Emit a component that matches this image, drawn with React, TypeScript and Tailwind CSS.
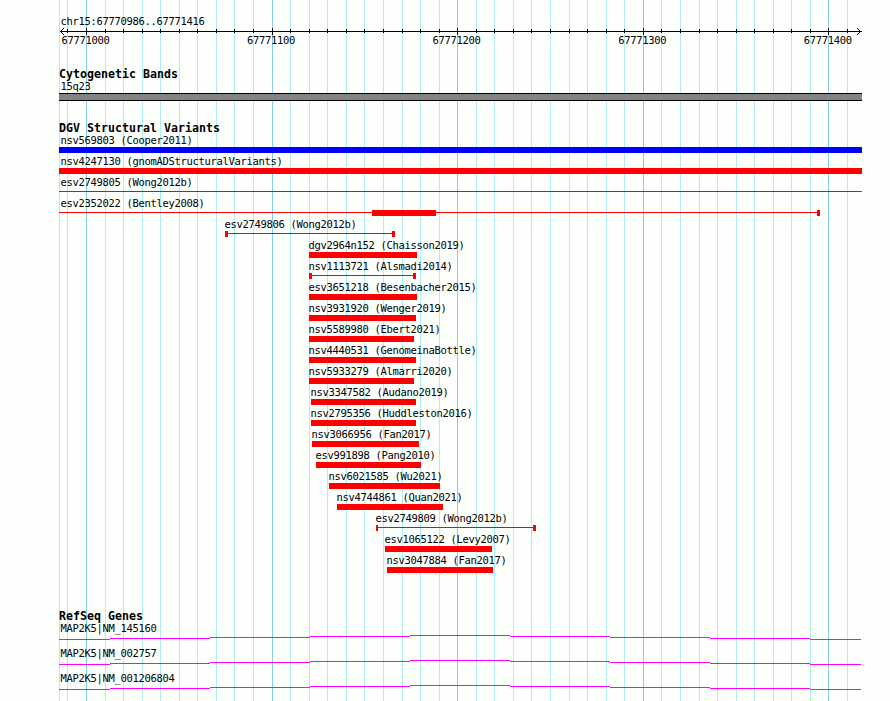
type Span = [start: number, end: number];

type Variant = {
  name: string;
  study: string;
  line?: Span;
  boxes: Span[];
  labelX: number;
  color?: string;
};

const TRACK_LEFT = 59;
const TRACK_RIGHT = 862;

const majorLines = [86, 272, 457, 643, 828];
const minorLines = [
  59, 67, 105, 123, 142, 160, 179, 197, 216, 234, 253, 290, 309, 327, 346, 364, 383, 402, 420, 439,
  476, 494, 513, 531, 550, 569, 587, 606, 624, 661, 680, 699, 717, 736, 754, 773, 791, 810, 847,
];

const positions = [67771000, 67771100, 67771200, 67771300, 67771400];

const variants: Variant[] = [
  { name: "nsv569803", study: "Cooper2011", boxes: [[59, 862]], labelX: 60, color: "#0000ff" },
  { name: "nsv4247130", study: "gnomADStructuralVariants", boxes: [[59, 862]], labelX: 60 },
  { name: "esv2749805", study: "Wong2012b", line: [59, 862], boxes: [], labelX: 60 },
  { name: "esv2352022", study: "Bentley2008", line: [59, 820], boxes: [[372, 436], [817, 820]], labelX: 60 },
  { name: "esv2749806", study: "Wong2012b", line: [225, 395], boxes: [[225, 228], [392, 395]], labelX: 224 },
  { name: "dgv2964n152", study: "Chaisson2019", boxes: [[309, 417]], labelX: 308 },
  { name: "nsv1113721", study: "Alsmadi2014", line: [309, 416], boxes: [[309, 312], [413, 416]], labelX: 308 },
  { name: "esv3651218", study: "Besenbacher2015", boxes: [[309, 417]], labelX: 308 },
  { name: "nsv3931920", study: "Wenger2019", boxes: [[309, 416]], labelX: 308 },
  { name: "nsv5589980", study: "Ebert2021", boxes: [[309, 414]], labelX: 308 },
  { name: "nsv4440531", study: "GenomeinaBottle", boxes: [[309, 416]], labelX: 308 },
  { name: "nsv5933279", study: "Almarri2020", boxes: [[309, 414]], labelX: 308 },
  { name: "nsv3347582", study: "Audano2019", boxes: [[311, 416]], labelX: 310 },
  { name: "nsv2795356", study: "Huddleston2016", boxes: [[311, 416]], labelX: 310 },
  { name: "nsv3066956", study: "Fan2017", boxes: [[312, 419]], labelX: 311 },
  { name: "esv991898", study: "Pang2010", boxes: [[316, 421]], labelX: 315 },
  { name: "nsv6021585", study: "Wu2021", boxes: [[329, 440]], labelX: 328 },
  { name: "nsv4744861", study: "Quan2021", boxes: [[337, 443]], labelX: 336 },
  { name: "esv2749809", study: "Wong2012b", line: [376, 536], boxes: [[376, 378], [533, 536]], labelX: 375 },
  { name: "esv1065122", study: "Levy2007", boxes: [[385, 492]], labelX: 384 },
  { name: "nsv3047884", study: "Fan2017", boxes: [[387, 493]], labelX: 386 },
];

const genes = ["MAP2K5|NM_145160", "MAP2K5|NM_002757", "MAP2K5|NM_001206804"];

// The intron is drawn as a very flat hat, one pixel per step
const intronSteps = [
  { x: 59, end: 110, y: 4 },
  { x: 110, end: 210, y: 3 },
  { x: 210, end: 310, y: 2 },
  { x: 310, end: 410, y: 1 },
  { x: 410, end: 510, y: 0 },
  { x: 510, end: 610, y: 1 },
  { x: 610, end: 710, y: 2 },
  { x: 710, end: 810, y: 3 },
  { x: 810, end: 861, y: 4 },
];

const Gridlines = () => (
  <svg className="absolute inset-0" width={890} height={701} shapeRendering="crispEdges">
    {minorLines.map((x) => (
      <rect key={x} x={x} y={0} width={1} height={701} fill="#afeeee" />
    ))}
    {majorLines.map((x) => (
      <rect key={x} x={x} y={0} width={1} height={701} fill="#87ceeb" />
    ))}
  </svg>
);

const Label = ({ children, x = 60 }: { children: string; x?: number }) => (
  <div
    className="h-3 whitespace-pre text-[10.5px] leading-3 tracking-[-0.321px]"
    style={{ paddingLeft: x + 0.4 }}
  >
    {children}
  </div>
);

const TrackTitle = ({ children }: { children: string }) => (
  <h2 className="h-3 whitespace-pre pl-[59px] text-[11.6px] leading-3 font-bold tracking-[0.017px]">
    {children}
  </h2>
);

const Ruler = () => (
  <div>
    <svg className="block" width={890} height={7} shapeRendering="crispEdges">
      <rect x={60} y={3} width={802} height={1} />
      {minorLines.slice(1).map((x) => (
        <rect key={x} x={x} y={1} width={1} height={4} />
      ))}
      {majorLines.map((x) => (
        <rect key={x} x={x} y={0} width={1} height={7} />
      ))}
      {[1, 2, 3].map((d) => (
        <g key={d}>
          <rect x={60 + d} y={3 - d} width={1} height={1} />
          <rect x={60 + d} y={3 + d} width={1} height={1} />
          <rect x={860 - d} y={3 - d} width={1} height={1} />
          <rect x={860 - d} y={3 + d} width={1} height={1} />
        </g>
      ))}
    </svg>
    <div className="-mt-px flex pl-[61.4px] text-[10.5px] leading-3 tracking-[-0.321px]">
      {positions.map((p) => (
        <span key={p} className="w-[185.6px] shrink-0">
          {p}
        </span>
      ))}
    </div>
  </div>
);

const VariantRow = ({ variant }: { variant: Variant }) => {
  const { name, study, line, boxes, labelX, color = "#ff0000" } = variant;
  return (
    <div className="h-[21px]">
      <Label x={labelX}>{`${name} (${study})`}</Label>
      <svg className="mt-px block" width={890} height={6} shapeRendering="crispEdges">
        {line && <rect x={line[0]} y={2} width={line[1] - line[0]} height={1} fill={color} />}
        {boxes.map(([start, end]) => (
          <rect key={start} x={start} y={0} width={end - start} height={6} fill={color} />
        ))}
      </svg>
    </div>
  );
};

const GeneRow = ({ name }: { name: string }) => (
  <div className="h-[25px]">
    <Label>{name}</Label>
    <svg className="mt-px block" width={890} height={5} shapeRendering="crispEdges">
      {intronSteps.map((s) => (
        <rect key={s.x} x={s.x} y={s.y} width={s.end - s.x} height={1} fill="#ff00ff" />
      ))}
    </svg>
  </div>
);

export default function App() {
  return (
    <div className="relative h-[701px] w-[890px] overflow-hidden bg-[#fdfffc] font-['DejaVu_Sans_Mono',monospace] text-black">
      <Gridlines />
      <main className="relative pt-[15px]">
        <div className="h-[13px]">
          <Label>chr15:67770986..67771416</Label>
        </div>
        <Ruler />

        <section className="pt-[22px]">
          <TrackTitle>Cytogenetic Bands</TrackTitle>
          <Label>15q23</Label>
          <svg className="mt-px block" width={890} height={8} shapeRendering="crispEdges">
            <rect x={TRACK_LEFT} y={0} width={TRACK_RIGHT - TRACK_LEFT} height={8} />
            <rect x={TRACK_LEFT} y={1} width={TRACK_RIGHT - TRACK_LEFT} height={6} fill="#848284" />
          </svg>
        </section>

        <section className="pt-[21px]">
          <TrackTitle>DGV Structural Variants</TrackTitle>
          {variants.map((v) => (
            <VariantRow key={v.name} variant={v} />
          ))}
        </section>

        <section className="pt-[35px]">
          <TrackTitle>RefSeq Genes</TrackTitle>
          {genes.map((g) => (
            <GeneRow key={g} name={g} />
          ))}
        </section>
      </main>
    </div>
  );
}
